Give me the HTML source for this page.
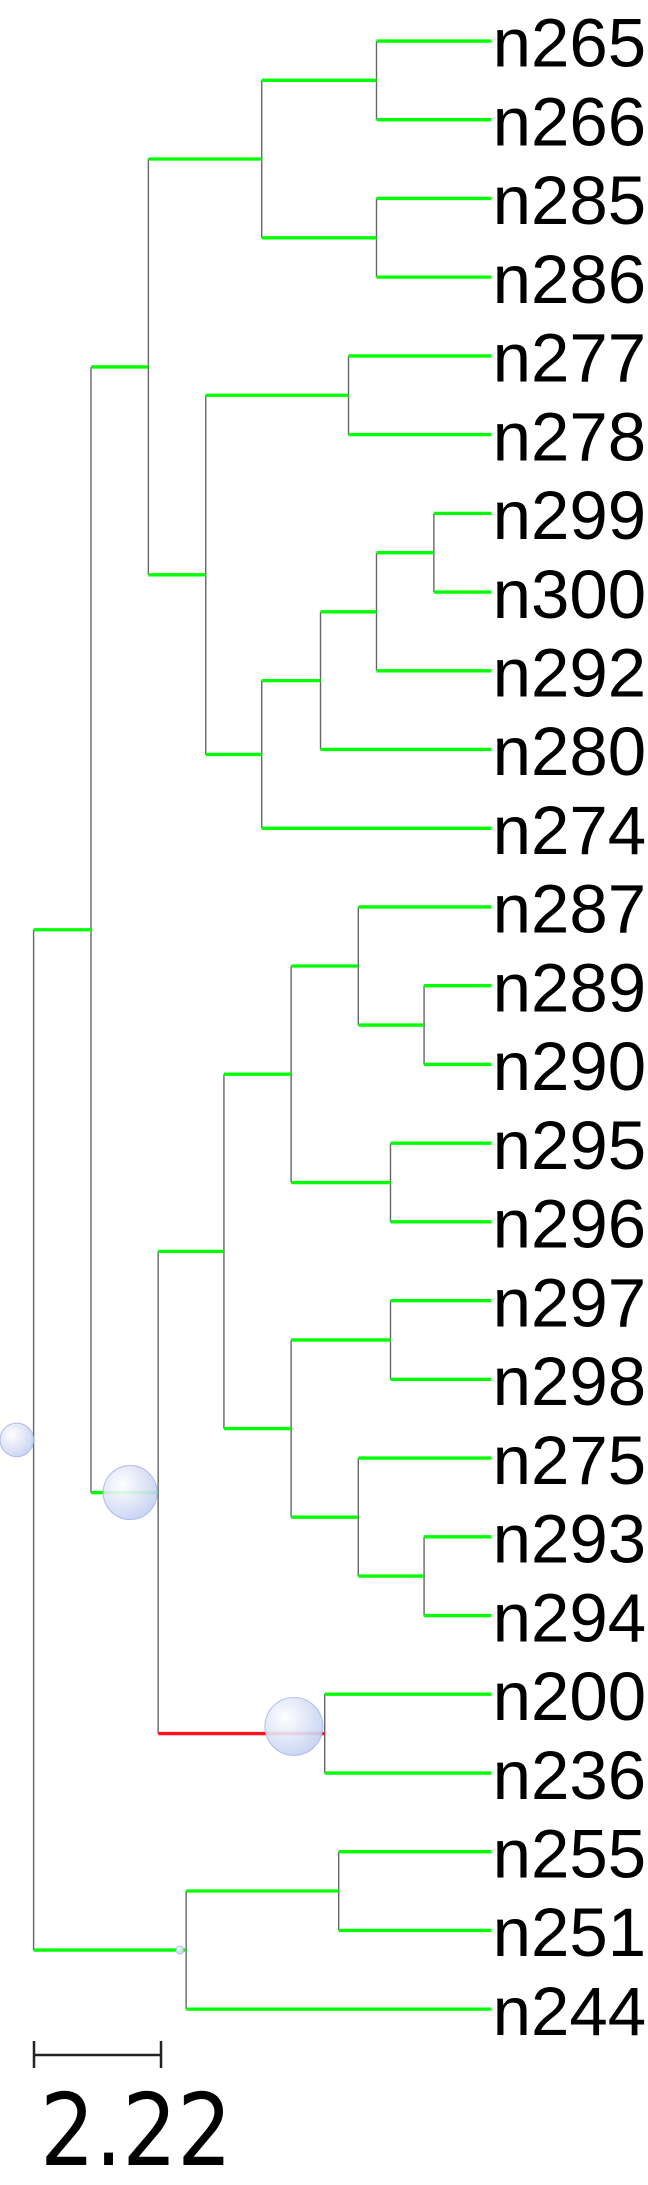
<!DOCTYPE html>
<html><head><meta charset="utf-8"><style>
html,body{margin:0;padding:0;background:#fff;}
svg{display:block;}
</style></head><body>
<svg width="648" height="2185" viewBox="0 0 648 2185" xmlns="http://www.w3.org/2000/svg">
<defs>
<radialGradient id="bg" cx="0.35" cy="0.35" r="0.7">
<stop offset="0" stop-color="#ffffff"/>
<stop offset="1" stop-color="#c4d0f2"/>
</radialGradient>
</defs>
<g transform="scale(1.3996)">
<g stroke="#666" stroke-width="1" fill="none">
<path d="M269 29.3V85.5 M269 141.8V198 M187 57.4V169.9 M249 254.3V310.5 M310 366.8V423 M269 394.9V479.3 M229 437.1V535.5 M187 486.3V591.8 M147 282.4V539 M106 113.6V410.7 M65 262.2V1066.4 M303 704.3V760.5 M256 648V732.4 M279 816.8V873 M208 690.2V844.9 M279 929.3V985.5 M303 1098V1154.3 M256 1041.8V1126.1 M208 957.4V1084 M160 767.5V1020.7 M232 1210.5V1266.8 M113 894.1V1238.6 M242 1323V1379.3 M133 1351.1V1435.5 M24 664.3V1393.3"/>
</g>
<g stroke="#00ff00" stroke-width="2.4" fill="none">
<path d="M269 29.3H351 M269 85.5H351 M269 141.8H351 M269 198H351 M187 57.4H269 M187 169.9H269 M106 113.6H187
M249 254.3H351 M249 310.5H351 M310 366.8H351 M310 423H351 M269 394.9H310 M269 479.3H351 M229 437.1H269 M229 535.5H351 M187 486.3H229 M187 591.8H351 M147 282.4H249 M147 539H187 M106 410.7H147 M65 262.2H106
M256 648H351 M303 704.3H351 M303 760.5H351 M256 732.4H303 M279 816.8H351 M279 873H351 M208 690.2H256 M208 844.9H279 M160 767.5H208
M279 929.3H351 M279 985.5H351 M303 1098H351 M303 1154.3H351 M256 1041.8H351 M256 1126.1H303 M208 957.4H279 M208 1084H256 M160 1020.7H208 M113 894.1H160
M232 1210.5H351 M232 1266.8H351 M65 1066.4H113
M242 1323H351 M242 1379.3H351 M133 1351.1H242 M133 1435.5H351 M24 664.3H65 M24 1393.3H133"/>
</g>
<path d="M113 1238.6H232" stroke="#ff1020" stroke-width="2.4"/>
<g fill="url(#bg)" stroke="#a4b4ea" stroke-width="0.7" opacity="0.9">
<circle cx="12" cy="1028.8" r="12"/>
<circle cx="93" cy="1066.4" r="19.3"/>
<circle cx="210" cy="1233.5" r="20.7"/>
<circle cx="128.5" cy="1393.3" r="2.8"/>
</g>
<g font-family="Liberation Sans, Arial, sans-serif" font-size="49.3" fill="#000">
<text x="352" y="47.7">n265</text>
<text x="352" y="103.9">n266</text>
<text x="352" y="160.2">n285</text>
<text x="352" y="216.4">n286</text>
<text x="352" y="272.7">n277</text>
<text x="352" y="328.9">n278</text>
<text x="352" y="385.2">n299</text>
<text x="352" y="441.4">n300</text>
<text x="352" y="497.7">n292</text>
<text x="352" y="553.9">n280</text>
<text x="352" y="610.2">n274</text>
<text x="352" y="666.4">n287</text>
<text x="352" y="722.7">n289</text>
<text x="352" y="778.9">n290</text>
<text x="352" y="835.2">n295</text>
<text x="352" y="891.4">n296</text>
<text x="352" y="947.7">n297</text>
<text x="352" y="1003.9">n298</text>
<text x="352" y="1060.2">n275</text>
<text x="352" y="1116.4">n293</text>
<text x="352" y="1172.7">n294</text>
<text x="352" y="1228.9">n200</text>
<text x="352" y="1285.2">n236</text>
<text x="352" y="1341.4">n255</text>
<text x="352" y="1397.7">n251</text>
<text x="352" y="1453.9">n244</text>
</g>
</g>
<path d="M34 2055H161 M34 2041V2068 M161 2041V2068" stroke="#222" stroke-width="2.5" fill="none"/>
<text x="40" y="2165" font-family="DejaVu Sans, sans-serif" font-size="100" textLength="192" lengthAdjust="spacingAndGlyphs" fill="#000">2.22</text>
</svg>
</body></html>
